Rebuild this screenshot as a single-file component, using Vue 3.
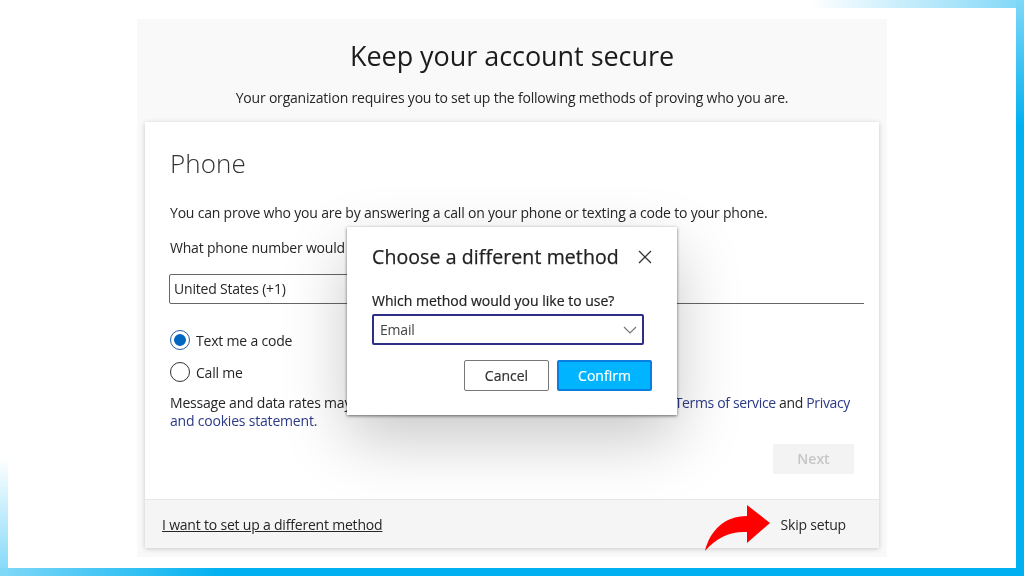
<script setup>
</script>

<template>
  <div class="page">
    <div class="edge edge-top"></div>
    <div class="edge edge-right"></div>
    <div class="edge edge-bottom"></div>
    <div class="edge edge-left"></div>

    <main class="panel">
      <h1 class="title">Keep your account secure</h1>
      <p class="subtitle">Your organization requires you to set up the following methods of proving who you are.</p>

      <section class="card">
        <div class="card-body">
          <h2 class="heading">Phone</h2>
          <p class="intro">You can prove who you are by answering a call on your phone or texting a code to your phone.</p>
          <p class="question">What phone number would</p>

          <div class="phone-row">
            <div class="country">United States (+1)</div>
            <div class="number"></div>
          </div>

          <div class="radio-row">
            <span class="radio is-checked"></span>
            <span>Text me a code</span>
          </div>
          <div class="radio-row second">
            <span class="radio"></span>
            <span>Call me</span>
          </div>

          <div class="legal">
            <div class="legal-line">
              <span>Message and data rates may</span>
              <span class="legal-right"><a>Terms of service</a> and <a>Privacy</a></span>
            </div>
            <a>and cookies statement.</a>
          </div>

          <div class="next-row">
            <div class="next">Next</div>
          </div>
        </div>

        <footer class="card-foot">
          <span class="other">I want to set up a different method</span>
          <span class="skip">Skip setup</span>
        </footer>
      </section>
    </main>

    <div class="modal">
      <div class="modal-head">
        <h3>Choose a different method</h3>
        <svg class="close" width="14" height="14" viewBox="0 0 14 14">
          <path d="M1 1l12 12M13 1L1 13" stroke="#333" stroke-width="1.3" fill="none" />
        </svg>
      </div>
      <label class="modal-label">Which method would you like to use?</label>
      <div class="modal-select">
        <span>Email</span>
        <svg width="14" height="8" viewBox="0 0 14 8">
          <path d="M1 1l6 6 6-6" stroke="#777" stroke-width="1.2" fill="none" />
        </svg>
      </div>
      <div class="modal-actions">
        <button class="btn cancel" type="button">Cancel</button>
        <button class="btn confirm" type="button">Confirm</button>
      </div>
    </div>

    <svg class="arrow" width="70" height="50" viewBox="0 0 70 50">
      <path d="M1 47C6 27 20 12 43 12V1L66 19 43 39V28C26 27 12 34 1 47Z" fill="#ff0000" />
    </svg>
  </div>
</template>

<style scoped>
.page {
  position: relative;
  box-sizing: border-box;
  width: 1024px;
  height: 576px;
  padding: 19px 137px 0;
  overflow: hidden;
  background: #ffffff;
  color: #262626;
  font-family: "Open Sans", "Noto Sans", sans-serif;
  letter-spacing: -0.2px;
  filter: blur(0.3px);
}

.edge {
  position: absolute;
}

.edge-top {
  top: 0;
  right: 0;
  width: 214px;
  height: 8px;
  background: linear-gradient(90deg, rgba(0, 176, 240, 0), rgba(0, 176, 240, 0.5));
}

.edge-right {
  top: 0;
  right: 0;
  width: 8px;
  height: 576px;
  background: linear-gradient(180deg, #7fd8f8 0, #00b0f0 22%);
}

.edge-bottom {
  left: 0;
  bottom: 0;
  width: 1024px;
  height: 8px;
  background: linear-gradient(90deg, #7fd8f8 0, #00b0f0 22%);
}

.edge-left {
  left: 0;
  bottom: 0;
  width: 8px;
  height: 118px;
  background: linear-gradient(0deg, #7fd8f8, rgba(127, 216, 248, 0));
}

.panel {
  display: flex;
  flex-direction: column;
  height: 538px;
  padding: 0 8px;
  box-sizing: border-box;
  background: #f9f9f9;
}

.title {
  margin: 17px 0 0;
  color: #1b1b1b;
  font-size: 27px;
  font-weight: 400;
  letter-spacing: -0.05px;
  line-height: 40px;
  text-align: center;
}

.subtitle {
  margin: 12px 0 0;
  font-size: 14px;
  line-height: 20px;
  text-align: center;
}

.card {
  display: flex;
  flex-direction: column;
  height: 426px;
  margin-top: 14px;
  background: #ffffff;
  box-shadow: 0 1px 5px rgba(0, 0, 0, 0.2);
}

.card-body {
  flex: 1;
  padding: 21px 15px 0 25px;
}

.heading {
  margin: 0;
  color: #333333;
  font-size: 26px;
  font-weight: 300;
  letter-spacing: 0.1px;
  line-height: 40px;
}

.intro {
  margin: 20px 0 0;
  font-size: 14px;
  line-height: 20px;
}

.question {
  margin: 15px 0 0;
  font-size: 14px;
  line-height: 20px;
}

.phone-row {
  display: flex;
  gap: 10px;
  height: 30px;
  margin: 16px 0 0 -1px;
}

.country {
  box-sizing: border-box;
  width: 190px;
  padding-left: 4px;
  border: 1px solid #666666;
  border-radius: 2px;
  font-size: 14px;
  line-height: 28px;
}

.number {
  flex: 1;
  border-bottom: 1px solid #666666;
}

.radio-row {
  display: flex;
  align-items: center;
  gap: 6px;
  height: 22px;
  margin-top: 25px;
  font-size: 14px;
}

.radio-row.second {
  margin-top: 10px;
}

.radio {
  box-sizing: border-box;
  width: 20px;
  height: 20px;
  border: 1px solid #333333;
  border-radius: 50%;
}

.radio.is-checked {
  border-color: #2a5ea8;
  background: radial-gradient(circle, #0067c0 0 5.5px, #ffffff 6.2px);
}

.legal {
  margin-top: 11px;
  font-size: 14px;
  line-height: 18px;
}

.legal a {
  color: #2b3a86;
}

.legal-line {
  display: flex;
  justify-content: space-between;
  width: 680px;
}

.legal-right {
  letter-spacing: -0.35px;
}

.next-row {
  display: flex;
  justify-content: flex-end;
  margin: 14px 10px 0 0;
}

.next {
  width: 81px;
  height: 30px;
  background: #f3f3f3;
  color: #c6c6c6;
  font-size: 14px;
  font-weight: 600;
  letter-spacing: 0;
  line-height: 30px;
  text-align: center;
}

.card-foot {
  display: flex;
  align-items: center;
  justify-content: space-between;
  height: 49px;
  padding: 0 33px 0 17px;
  box-sizing: border-box;
  border-top: 1px solid #e8e8e8;
  background: #f5f5f5;
  font-size: 14px;
}

.other {
  text-decoration: underline;
}

.modal {
  position: absolute;
  top: 227px;
  left: 347px;
  box-sizing: border-box;
  width: 330px;
  height: 188px;
  padding: 14px 25px 0;
  background: #ffffff;
  box-shadow:
    0 1px 3px rgba(0, 0, 0, 0.55),
    0 24px 60px rgba(0, 0, 0, 0.22);
}

.modal-head {
  display: flex;
  align-items: center;
  justify-content: space-between;
  height: 32px;
}

.modal-head h3 {
  margin: 0 0 2px;
  color: #222222;
  font-size: 19.5px;
  font-weight: 500;
  letter-spacing: 0.1px;
  white-space: nowrap;
  -webkit-text-stroke: 0.25px #222222;
}

.close {
  flex: none;
}

.modal-label {
  display: block;
  margin-top: 18px;
  color: #222222;
  font-size: 14px;
  font-weight: 500;
  letter-spacing: 0;
  line-height: 20px;
  -webkit-text-stroke: 0.2px #222222;
}

.modal-select {
  display: flex;
  align-items: center;
  justify-content: space-between;
  box-sizing: border-box;
  width: 272px;
  height: 31px;
  margin-top: 3px;
  padding: 0 5px 0 6px;
  border: 2px solid #2d2f86;
  border-radius: 2px;
  color: #444444;
  font-size: 14px;
}

.modal-actions {
  display: flex;
  justify-content: flex-end;
  gap: 8px;
  margin-top: 15px;
}

.btn {
  box-sizing: border-box;
  height: 31px;
  padding: 0;
  border-radius: 2px;
  font-family: inherit;
  font-size: 14px;
  font-weight: 500;
  letter-spacing: 0;
}

.cancel {
  width: 85px;
  border: 1px solid #777777;
  background: #ffffff;
  color: #333333;
  -webkit-text-stroke: 0.2px #333333;
}

.confirm {
  width: 95px;
  border: 2px solid #0a7ee0;
  background: #00b4ff;
  color: #ffffff;
  -webkit-text-stroke: 0.2px #ffffff;
}

.arrow {
  position: absolute;
  top: 504px;
  left: 704px;
}
</style>
